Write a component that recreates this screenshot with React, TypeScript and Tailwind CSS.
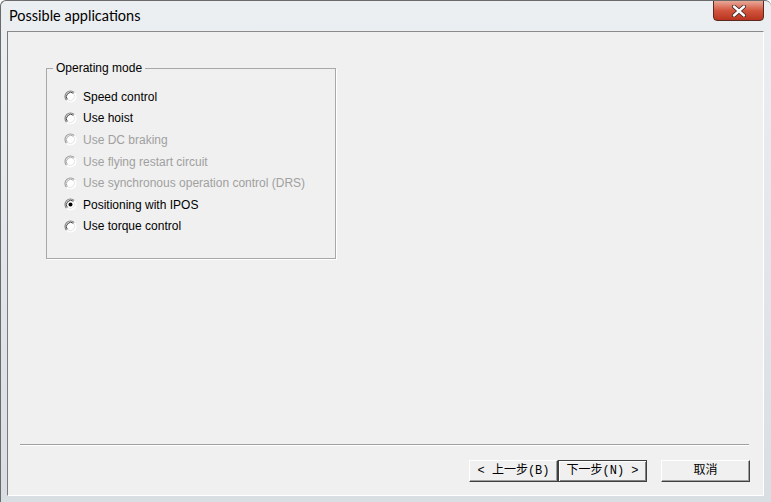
import React from "react";

function Radio({ checked, disabled }: { checked?: boolean; disabled?: boolean }) {
  return (
    <svg width="13" height="13" viewBox="0 0 13 13" className="shrink-0">
      <circle cx="6.5" cy="6.5" r="5.5" fill="#ffffff" />
      <path d="M10.4 2.6 A5.5 5.5 0 0 0 2.6 10.4" fill="none" stroke={disabled ? "#9a9a9a" : "#808080"} strokeWidth="1.1" />
      <path d="M9.6 3.4 A4.4 4.4 0 0 0 3.4 9.6" fill="none" stroke={disabled ? "#a8a8a8" : "#404040"} strokeWidth="1" />
      <path d="M10.4 2.6 A5.5 5.5 0 0 1 2.6 10.4" fill="none" stroke="#ffffff" strokeWidth="1.1" />
      <path d="M9.6 3.4 A4.4 4.4 0 0 1 3.4 9.6" fill="none" stroke="#e3e3e3" strokeWidth="1" />
      {checked && <circle cx="6.5" cy="6.5" r="2" fill="#000000" />}
    </svg>
  );
}

const options = [
  { label: "Speed control", disabled: false, checked: false },
  { label: "Use hoist", disabled: false, checked: false },
  { label: "Use DC braking", disabled: true, checked: false },
  { label: "Use flying restart circuit", disabled: true, checked: false },
  { label: "Use synchronous operation control (DRS)", disabled: true, checked: false },
  { label: "Positioning with IPOS", disabled: false, checked: true },
  { label: "Use torque control", disabled: false, checked: false },
];

function Btn({ children, def }: { children: React.ReactNode; def?: boolean }) {
  return (
    <div
      className={
        "w-[89px] h-[22px] flex items-center justify-center bg-[#f0f0f0] text-[12px] text-black whitespace-pre " +
        (def
          ? "border border-[#404040] shadow-[inset_1px_1px_0_#ffffff,inset_-1px_-1px_0_#808080]"
          : "border-t border-l border-t-[#ffffff] border-l-[#ffffff] border-r border-b border-r-[#404040] border-b-[#404040] shadow-[inset_-1px_-1px_0_#a0a0a0]")
      }
      style={{ fontFamily: '"Liberation Mono", "Noto Sans CJK SC", monospace' }}
    >
      {children}
    </div>
  );
}

export default function App() {
  return (
    <div className="w-[771px] h-[502px] overflow-hidden relative flex flex-col rounded-t-[6px] border-l border-t border-[#6a6a6a] bg-gradient-to-b from-[#eceff2] to-[#d9dee3]">
      <div className="h-[30px] flex items-start shrink-0">
        <div
          className="pl-[8px] pt-[4px] text-[14.5px] text-black leading-[22px]"
          style={{ fontFamily: 'Lato, "Open Sans", sans-serif' }}
        >
          Possible applications
        </div>
        <div className="ml-auto mr-[7px] w-[51px] h-[21px] -mt-px rounded-b-[4px] border border-[#5a2a22] bg-gradient-to-b from-[#e7a898] via-[#d2553e] to-[#b8331e] flex items-center justify-center">
          <svg width="16" height="12" viewBox="0 0 16 12">
            <path d="M3 1.5 L13 10.5 M13 1.5 L3 10.5" stroke="#3a2320" strokeWidth="4" strokeLinecap="round" />
            <path d="M3 1.5 L13 10.5 M13 1.5 L3 10.5" stroke="#ffffff" strokeWidth="2.4" strokeLinecap="round" />
          </svg>
        </div>
      </div>
      <div className="flex-1 ml-[6px] mr-[7px] mb-[6px] border border-t-[#8a8a8a] border-l-[#7a7a7a] border-r-[#ffffff] border-b-[#ffffff] bg-[#f0f0f0] flex flex-col">
        <div className="pl-[38px] pt-[29px] flex-1">
          <fieldset className="w-[290px] h-[198px] border border-[#a8a8a8] shadow-[1px_1px_0_#ffffff] px-0 pt-[11px]">
            <legend
              className="ml-[6px] px-[3px] text-[12px] text-black leading-[14px]"
              style={{ fontFamily: '"Liberation Sans", Arial, sans-serif' }}
            >
              Operating mode
            </legend>
            <div className="flex flex-col pl-[17px]">
              {options.map((o) => (
                <div key={o.label} className="h-[21.6px] flex items-center gap-[6px]">
                  <Radio checked={o.checked} disabled={o.disabled} />
                  <span
                    className={"text-[12px] " + (o.disabled ? "text-[#a0a0a0]" : "text-black")}
                    style={{ fontFamily: '"Liberation Sans", Arial, sans-serif' }}
                  >
                    {o.label}
                  </span>
                </div>
              ))}
            </div>
          </fieldset>
        </div>
        <div className="ml-[12px] mr-[14px] h-[2px] border-t border-[#a0a0a0] border-b border-b-[#ffffff]" />
        <div className="flex justify-end items-center pt-[14px] pb-[13px] pr-[13px]">
          <Btn>&lt; 上一步(B)</Btn>
          <Btn def>下一步(N) &gt;</Btn>
          <div className="w-[14px]" />
          <Btn>取消</Btn>
        </div>
      </div>
    </div>
  );
}
